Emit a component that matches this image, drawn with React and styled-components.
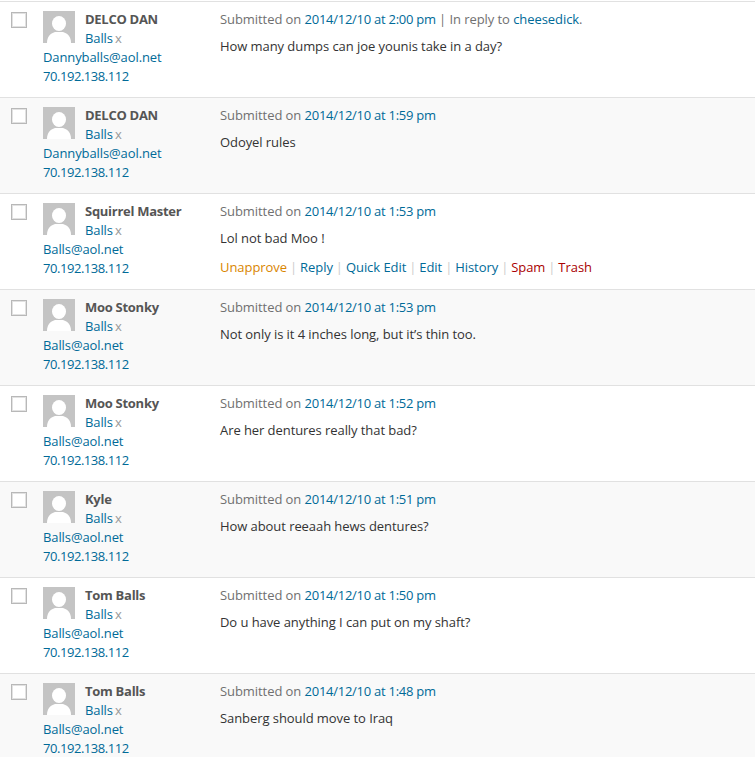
import React from 'react';
import styled, { createGlobalStyle } from 'styled-components';

const Global = createGlobalStyle`
  html, body {
    margin: 0;
    padding: 0;
    background: #fff;
  }
  body {
    font-family: "Open Sans", "Liberation Sans", sans-serif;
    font-size: 13px;
    line-height: 19px;
    color: #555;
    overflow: hidden;
  }
  a {
    color: #006a98;
    text-decoration: none;
  }
`;

const List = styled.div`
  width: 755px;
  height: 757px;
  overflow: hidden;
  padding-top: 1px;
  box-sizing: border-box;
`;

const Row = styled.div`
  display: flex;
  height: 96px;
  box-sizing: border-box;
  border-top: 1px solid #e1e1e1;
  background: ${(p) => (p.$alt ? '#f9f9f9' : '#fff')};
`;

const CheckCol = styled.div`
  width: 43px;
  padding: 10px 0 0 11px;
  box-sizing: border-box;
`;

const Check = styled.span`
  display: block;
  width: 16px;
  height: 16px;
  box-sizing: border-box;
  border: 1px solid #b8b8b8;
  background: #fff;
  box-shadow: inset 0 0 0 1px #e2e2e2;
`;

const AuthorCol = styled.div`
  width: 177px;
  padding-top: 8px;
  box-sizing: border-box;
  letter-spacing: -0.1px;
`;

const Author = styled.div`
  display: flex;
  gap: 10px;
  height: 38px;
`;

const Avatar = styled.svg`
  width: 32px;
  height: 32px;
  margin-top: 1px;
  flex: none;
`;

const Name = styled.strong`
  display: block;
  font-weight: 700;
  color: #555;
  letter-spacing: -0.28px;
`;

const Ban = styled.span`
  color: #999;
  margin-left: 2px;
`;

const AuthorLink = styled.a`
  display: block;
  letter-spacing: ${(p) => p.$spacing || 'inherit'};
`;

const Body = styled.div`
  flex: 1;
  padding-top: 8px;
`;

const Meta = styled.div`
  color: #707070;
  letter-spacing: -0.07px;
`;

const DateLink = styled.a`
  letter-spacing: -0.26px;
`;

const Text = styled.p`
  margin: 8px 0 0;
  color: #333;
  letter-spacing: -0.07px;
`;

const Actions = styled.div`
  display: flex;
  margin-top: 10px;
  letter-spacing: -0.05px;
`;

const Action = styled.a`
  color: ${(p) => p.$color || '#006a98'};
`;

const Separator = styled.span`
  width: 13px;
  text-align: center;
  color: #ccc;
`;

const rows = [
  { name: 'DELCO DAN', email: 'Dannyballs@aol.net', time: '2:00 pm', reply: 'cheesedick', text: 'How many dumps can joe younis take in a day?' },
  { name: 'DELCO DAN', email: 'Dannyballs@aol.net', time: '1:59 pm', text: 'Odoyel rules' },
  { name: 'Squirrel Master', email: 'Balls@aol.net', time: '1:53 pm', text: 'Lol not bad Moo !', actions: true },
  { name: 'Moo Stonky', email: 'Balls@aol.net', time: '1:53 pm', text: 'Not only is it 4 inches long, but it’s thin too.' },
  { name: 'Moo Stonky', email: 'Balls@aol.net', time: '1:52 pm', text: 'Are her dentures really that bad?' },
  { name: 'Kyle', email: 'Balls@aol.net', time: '1:51 pm', text: 'How about reeaah hews dentures?' },
  { name: 'Tom Balls', email: 'Balls@aol.net', time: '1:50 pm', text: 'Do u have anything I can put on my shaft?' },
  { name: 'Tom Balls', email: 'Balls@aol.net', time: '1:48 pm', text: 'Sanberg should move to Iraq' },
];

const actions = [
  { label: 'Unapprove', color: '#d98500' },
  { label: 'Reply' },
  { label: 'Quick Edit' },
  { label: 'Edit' },
  { label: 'History' },
  { label: 'Spam', color: '#a00' },
  { label: 'Trash', color: '#a00' },
];

const MysteryMan = () => (
  <Avatar viewBox="0 0 32 32">
    <rect width="32" height="32" fill="#c4c4c4" />
    <ellipse cx="16" cy="12.500" rx="7" ry="7.500" fill="#fff" />
    <path d="M4 32c0-6 3-9.500 8-11h8c5 1.500 8 5 8 11z" fill="#fff" />
  </Avatar>
);

const App = () => {
  return (
    <List>
      <Global />
      {rows.map((r, i) => (
        <Row key={i} $alt={i % 2 === 1}>
          <CheckCol>
            <Check />
          </CheckCol>
          <AuthorCol>
            <Author>
              <MysteryMan />
              <div>
                <Name>{r.name}</Name>
                <a href="#">Balls</a>
                <Ban>x</Ban>
              </div>
            </Author>
            <AuthorLink href="#">{r.email}</AuthorLink>
            <AuthorLink href="#" $spacing="-0.45px">70.192.138.112</AuthorLink>
          </AuthorCol>
          <Body>
            <Meta>
              Submitted on <DateLink href="#">2014/12/10 at {r.time}</DateLink>
              {r.reply && (
                <>
                  {' | In reply to '}
                  <a href="#">{r.reply}</a>.
                </>
              )}
            </Meta>
            <Text>{r.text}</Text>
            {r.actions && (
              <Actions>
                {actions.map((a, j) => (
                  <React.Fragment key={a.label}>
                    {j > 0 && <Separator>|</Separator>}
                    <Action href="#" $color={a.color}>{a.label}</Action>
                  </React.Fragment>
                ))}
              </Actions>
            )}
          </Body>
        </Row>
      ))}
    </List>
  );
};

export default App;
